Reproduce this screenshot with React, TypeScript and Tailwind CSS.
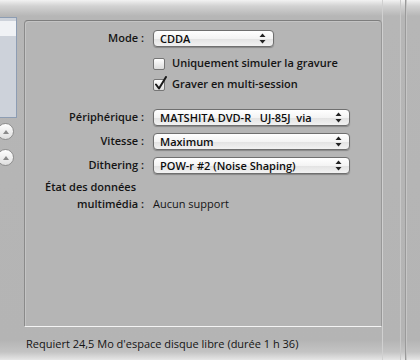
import React from "react";

const font = { fontFamily: '"Open Sans", "Liberation Sans", sans-serif' };

function Arrows() {
  return (
    <svg width="7" height="11" viewBox="0 0 7 11" className="shrink-0">
      <path d="M3.5 0.5 L6.5 4 L0.5 4 Z" fill="#222" />
      <path d="M3.5 10.5 L6.5 7 L0.5 7 Z" fill="#222" />
    </svg>
  );
}

function Popup({ text, width }: { text: string; width: string }) {
  return (
    <div
      className={`${width} h-[17px] rounded-[4px] border border-[#6f6f6f] bg-[linear-gradient(#ffffff_0%,#f4f4f4_50%,#e2e2e2_51%,#f2f2f2_100%)] shadow-[0_1px_1px_rgba(0,0,0,0.25)] flex items-center justify-between pl-[6px] pr-[7px]`}
    >
      <span className="text-[11px] font-semibold text-[#0d0d0d] whitespace-pre leading-none">{text}</span>
      <Arrows />
    </div>
  );
}

function Checkbox({ checked }: { checked?: boolean }) {
  return (
    <div className="relative w-[12px] h-[12px] rounded-[2px] border border-[#767676] bg-[linear-gradient(#ffffff,#dcdcdc)] shrink-0">
      {checked && (
        <svg width="14" height="15" viewBox="0 0 14 15" className="absolute left-[0px] top-[-4px]">
          <path d="M2 8.5 L5 12.5 L12 1" stroke="#1a1a1a" strokeWidth="2" fill="none" strokeLinecap="round" strokeLinejoin="round" />
        </svg>
      )}
    </div>
  );
}

function Row({ label, children }: { label: string; children: React.ReactNode }) {
  return (
    <div className="flex items-center h-[17px]">
      <div className="w-[119px] text-right text-[11px] font-semibold text-[#141414]">{label}</div>
      <div className="ml-[9px]">{children}</div>
    </div>
  );
}

export default function App() {
  return (
    <div
      className="relative w-[420px] h-[360px] overflow-hidden bg-[linear-gradient(#f2f2f2_0px,#d2d2d2_6px,#b6b6b6_16px,#b4b4b4_340px,#c4c4c4_352px,#e6e6e6_360px)] flex"
      style={font}
    >
      {/* left sidebar */}
      <div className="w-[24px] shrink-0 flex flex-col">
        <div className="mt-[17px] w-[17px] h-[101px] border border-[#8d9db3] border-l-0 bg-[#cdd2da] flex flex-col">
          <div className="h-[15px] mt-[3px] bg-[#f0f2f5]" />
        </div>
        <div className="mt-[5px] -ml-[3px] w-[17px] h-[17px] rounded-full border border-[#8e8e8e] bg-[linear-gradient(#ffffff,#dedede)] flex items-center justify-center">
          <svg width="8" height="6" viewBox="0 0 8 6"><path d="M1 5 L4 1 L7 5 Z" fill="#8a8a8a" /></svg>
        </div>
        <div className="mt-[9px] -ml-[3px] w-[17px] h-[17px] rounded-full border border-[#8e8e8e] bg-[linear-gradient(#ffffff,#dedede)] flex items-center justify-center">
          <svg width="8" height="6" viewBox="0 0 8 6"><path d="M1 5 L4 1 L7 5 Z" fill="#8a8a8a" /></svg>
        </div>
      </div>

      {/* main */}
      <div className="flex flex-col w-[358px] shrink-0">
        <div className="mt-[20px] h-[307px] rounded-tl-[4px] rounded-tr-[4px] border-t border-l border-t-[#7e7e7e] border-l-[#8a8a8a] border-r border-r-[#989898] border-b border-b-[#f4f4f4] bg-[#b5b5b5] shadow-[inset_1px_1px_0_#c4c4c4] flex flex-col pt-[9px]">
          <Row label="Mode :">
            <Popup text="CDDA" width="w-[121px]" />
          </Row>
          <div className="ml-[128px] mt-[10px] flex items-center gap-[7px] h-[13px]">
            <Checkbox />
            <span className="text-[11px] font-semibold text-[#141414]">Uniquement simuler la gravure</span>
          </div>
          <div className="ml-[128px] mt-[8px] flex items-center gap-[7px] h-[13px]">
            <Checkbox checked />
            <span className="text-[11px] font-semibold text-[#141414]">Graver en multi-session</span>
          </div>
          <div className="mt-[18px] flex flex-col gap-[7px]">
            <Row label="Périphérique :">
              <Popup text="MATSHITA DVD-R   UJ-85J  via" width="w-[197px]" />
            </Row>
            <Row label="Vitesse :">
              <Popup text="Maximum" width="w-[197px]" />
            </Row>
            <Row label="Dithering :">
              <Popup text="POW-r #2 (Noise Shaping)" width="w-[197px]" />
            </Row>
          </div>
          <div className="mt-[4px] flex">
            <div className="w-[119px] text-right text-[11px] font-semibold text-[#141414] leading-[17px]">
              <div className="text-left ml-[20px]">État des données</div>
              <div>multimédia :</div>
            </div>
            <div className="ml-[9px] mt-[17px] text-[11px] text-[#141414] leading-[17px] font-medium">Aucun support</div>
          </div>
        </div>
        <div className="mt-[9px] ml-[2px] text-[11px] text-[#141414] font-medium whitespace-nowrap">
          Requiert 24,5 Mo d'espace disque libre (durée 1 h 36)
        </div>
      </div>

      {/* right side */}
      <div className="flex-1 flex">
        <div className="w-[1px] h-full bg-[#d0d0d0]" />
        <div className="ml-[17px] w-[1px] h-full bg-[#c8c8c8]" />
        <div className="ml-[4px] w-[1px] h-full bg-[#9a9a9a]" />
        <div className="w-[1px] h-full bg-[#c6c6c6]" />
      </div>
    </div>
  );
}
